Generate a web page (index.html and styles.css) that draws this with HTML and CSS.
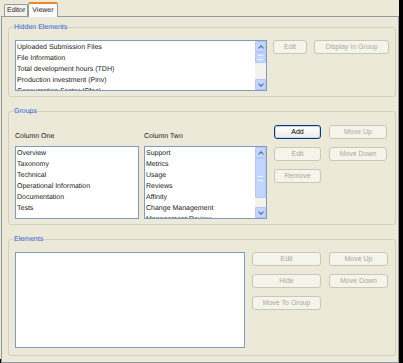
FILE: index.html
```html
<!DOCTYPE html>
<html lang="en">
<head>
  <meta charset="UTF-8">
  <title>Viewer</title>
  <link rel="stylesheet" href="styles.css">
</head>
<body>
  <div class="window">
    <div class="tabs">
      <div class="tab">Editor</div>
      <div class="tab active">Viewer</div>
    </div>
    <div class="panel">

      <fieldset class="group hidden-group">
        <legend>Hidden Elements</legend>
        <div class="listbox hidden-list">
          <div class="items">
            <div>Uploaded Submission Files</div>
            <div>File Information</div>
            <div>Total development hours (TDH)</div>
            <div>Production investment (Pinv)</div>
            <div>Consumption Factor (Cfac)</div>
          </div>
          <div class="scrollbar">
            <div class="sb-btn up"></div>
            <div class="sb-thumb short"></div>
            <div class="sb-track"></div>
            <div class="sb-btn down"></div>
          </div>
        </div>
        <button class="btn w-edit" disabled>Edit</button>
        <button class="btn w-display" disabled>Display In Group</button>
      </fieldset>

      <fieldset class="group groups-group">
        <legend>Groups</legend>
        <div class="columns">
          <div class="column">
            <div class="col-label">Column One</div>
            <div class="listbox col-list one">
              <div class="items">
                <div>Overview</div>
                <div>Taxonomy</div>
                <div>Technical</div>
                <div>Operational Information</div>
                <div>Documentation</div>
                <div>Tests</div>
              </div>
            </div>
          </div>
          <div class="column">
            <div class="col-label">Column Two</div>
            <div class="listbox col-list two">
              <div class="items">
                <div>Support</div>
                <div>Metrics</div>
                <div>Usage</div>
                <div>Reviews</div>
                <div>Affinity</div>
                <div>Change Management</div>
                <div>Management Review</div>
              </div>
              <div class="scrollbar">
                <div class="sb-btn up"></div>
                <div class="sb-thumb long"></div>
                <div class="sb-track"></div>
                <div class="sb-btn down"></div>
              </div>
            </div>
          </div>
        </div>
        <div class="btn-grid groups-btns">
          <button class="btn default">Add</button>
          <button class="btn" disabled>Move Up</button>
          <button class="btn" disabled>Edit</button>
          <button class="btn" disabled>Move Down</button>
          <button class="btn" disabled>Remove</button>
        </div>
      </fieldset>

      <fieldset class="group elements-group">
        <legend>Elements</legend>
        <div class="listbox elements-list"></div>
        <div class="btn-grid elements-btns">
          <button class="btn" disabled>Edit</button>
          <button class="btn" disabled>Move Up</button>
          <button class="btn" disabled>Hide</button>
          <button class="btn" disabled>Move Down</button>
          <button class="btn" disabled>Move To Group</button>
        </div>
      </fieldset>

    </div>
  </div>
</body>
</html>
```

FILE: styles.css
```css
html, body {
  margin: 0;
  padding: 0;
}

body {
  width: 403px;
  height: 363px;
  background: #000;
  font-family: "Liberation Sans", Arial, sans-serif;
  font-size: 7px;
  color: #1a1a1a;
  text-rendering: geometricPrecision;
}

.window {
  width: 398px;
  height: 359px;
  padding-left: 1px;
  background: #ECE9D8;
}

/* tabs */
.tabs {
  display: flex;
  align-items: flex-end;
  height: 16px;
  padding-left: 3px;
}

.tab {
  height: 11px;
  line-height: 11px;
  padding: 0 2px;
  background: #F3F3EE;
  border: 1px solid #919B9C;
  border-bottom: 0;
  border-radius: 2px 2px 0 0;
}

.tab.active {
  height: 13px;
  line-height: 13px;
  padding: 0 3px;
  background: #FCFCFE;
  border-top: 2px solid #E68B2C;
  margin-bottom: -1px;
  position: relative;
}

.panel {
  height: 340px;
  border: 1px solid #919B9C;
  background: #ECE9D8;
  padding-top: 5px;
}

/* group boxes */
.group {
  margin: 0 2px 9px 6px;
  border: 1px solid #D0D0BF;
  border-radius: 3px;
  padding: 7px 6px 5px 6px;
  display: flex;
  align-items: flex-start;
  min-width: 0;
}

.group legend {
  color: #2A5CD6;
  padding: 0 1px;
  margin-left: -2px;
  line-height: 11px;
}

/* list boxes */
.listbox {
  box-sizing: border-box;
  border: 1px solid #7F9DB9;
  background: #fff;
  display: flex;
  overflow: hidden;
}

.items {
  flex: 1;
  padding: 1px 0 0 1px;
  line-height: 11px;
  white-space: nowrap;
  overflow: hidden;
}

.hidden-list {
  width: 252px;
  height: 51px;
}

.col-list {
  height: 73px;
}

.col-list.one {
  width: 124px;
}

.col-list.two {
  width: 123px;
}

.elements-list {
  width: 230px;
  height: 96px;
}

/* scrollbar */
.scrollbar {
  width: 11px;
  display: flex;
  flex-direction: column;
  background: #F3F2EC;
}

.sb-btn {
  height: 11px;
  box-sizing: border-box;
  background: #C4D5FC;
  border: 1px solid #B4C8F6;
  border-radius: 1px;
  position: relative;
}

.sb-btn::after {
  content: "";
  position: absolute;
  left: 3px;
  width: 3px;
  height: 3px;
  border-left: 1px solid #4D6185;
  border-top: 1px solid #4D6185;
}

.sb-btn.up::after {
  top: 4px;
  transform: rotate(45deg);
}

.sb-btn.down::after {
  top: 2px;
  transform: rotate(225deg);
}

.sb-thumb {
  box-sizing: border-box;
  background: #C4D5FC;
  border: 1px solid #B4C8F6;
  border-radius: 1px;
  display: flex;
  align-items: center;
  justify-content: center;
}

.sb-thumb::before {
  content: "";
  width: 5px;
  height: 3px;
  border-top: 1px solid #EEF4FE;
  border-bottom: 1px solid #EEF4FE;
}

.sb-thumb.short {
  height: 11px;
}

.sb-thumb.long {
  height: 40px;
}

.sb-track {
  flex: 1;
}

/* groups columns */
.columns {
  display: flex;
  gap: 5px;
}

.col-label {
  line-height: 11px;
  margin: 6px 0 4px 0;
}

/* buttons */
.btn {
  box-sizing: border-box;
  height: 14px;
  padding: 0;
  font-family: inherit;
  font-size: 7px;
  line-height: 12px;
  border: 1px solid #C9C7BA;
  border-radius: 3px;
  background: #F5F4EA;
  color: #ACA899;
}

.btn.default {
  border-color: #003C74;
  background: linear-gradient(#FFFFFF, #ECEBE6);
  box-shadow: inset 0 0 0 1px #C6D5F0;
  color: #000;
}

.w-edit {
  width: 34px;
  margin-left: 6px;
}

.w-display {
  width: 75px;
  margin-left: 7px;
}

.btn-grid {
  display: grid;
  row-gap: 8px;
  column-gap: 8px;
}

.groups-btns {
  grid-template-columns: 47px 58px;
  margin-left: 7px;
}

.groups-group {
  padding-top: 8px;
}

.elements-btns {
  grid-template-columns: 69px 59px;
  margin-left: 7px;
}

.elements-group {
  padding-bottom: 7px;
}
```
